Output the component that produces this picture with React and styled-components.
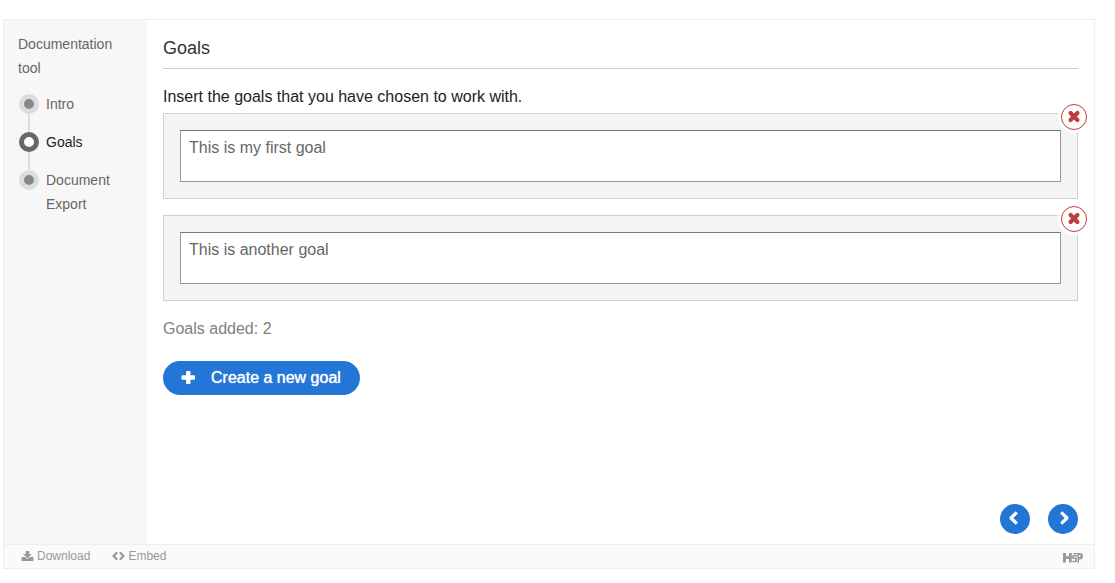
import React, { useState } from "react";
import styled, { createGlobalStyle, css } from "styled-components";

const GlobalStyle = createGlobalStyle`
  * {
    box-sizing: border-box;
  }

  body {
    margin: 0;
    background: #fff;
    font-family: "Liberation Sans", Arial, sans-serif;
  }
`;

const Page = styled.div`
  display: flex;
  min-height: 100vh;
  padding: 19px 20px 14px 3px;
`;

const Frame = styled.div`
  display: flex;
  flex: 1;
  flex-direction: column;
  border: 1px solid #eee;
`;

const Tool = styled.div`
  display: flex;
  flex: 1;
`;

const Sidebar = styled.nav`
  width: 143px;
  flex-shrink: 0;
  padding: 12px 14px;
  background: #f7f7f7;
  color: #666;
  font-size: 14px;
  line-height: 24px;
`;

const SidebarTitle = styled.div`
  margin-bottom: 12px;
`;

const Steps = styled.ol`
  display: flex;
  flex-direction: column;
  gap: 14px;
  margin: 0;
  padding: 0;
  list-style: none;
`;

const Step = styled.li`
  position: relative;

  /* line down to the next step */
  &:not(:last-child)::before {
    content: "";
    position: absolute;
    top: 12px;
    left: 10px;
    width: 2px;
    height: 38px;
    background: #ddd;
  }
`;

const StepButton = styled.button`
  position: relative;
  display: flex;
  align-items: flex-start;
  gap: 7px;
  width: 100%;
  padding: 0 0 0 1px;
  border: 0;
  background: none;
  color: ${props => (props.$active ? "#222" : "#666")};
  font: inherit;
  text-align: left;
  cursor: pointer;
`;

const Dot = styled.span`
  flex-shrink: 0;
  width: 20px;
  height: 20px;
  margin-top: 2px;
  border: 5px solid #ddd;
  border-radius: 50%;
  background: #888;

  ${props => props.$active && css`
    border-color: #666;
    background: #fff;
  `}
`;

const Main = styled.main`
  display: flex;
  flex: 1;
  flex-direction: column;
  min-width: 0;
  padding: 16px 16px 10px;
  color: #333;
  font-size: 16px;
  line-height: 24px;
`;

const Title = styled.h1`
  margin: 0 0 16px;
  padding-bottom: 8px;
  border-bottom: 1px solid #ccc;
  font-size: 18px;
  font-weight: normal;
`;

const Description = styled.p`
  margin: 0 0 4px;
  color: #222;
`;

const GoalList = styled.div`
  display: flex;
  flex-direction: column;
  gap: 16px;
`;

const Goal = styled.div`
  position: relative;
  display: flex;
  padding: 16px;
  border: 1px solid #d0d0d0;
  background: #f4f4f4;
`;

const GoalText = styled.textarea`
  display: block;
  flex: 1;
  height: 52px;
  padding: 5px 8px;
  border: 1px solid #999;
  border-top-color: #777;
  border-radius: 0;
  background: #fff;
  color: #666;
  font-family: inherit;
  font-size: 16px;
  line-height: 24px;
  resize: none;
  outline: none;
`;

const RemoveButton = styled.button`
  position: absolute;
  top: -10px;
  right: -10px;
  display: flex;
  align-items: center;
  justify-content: center;
  width: 26px;
  height: 26px;
  padding: 0;
  border: 1px solid #bf3d3d;
  border-radius: 50%;
  background: #fff;
  box-shadow: 0 0 0 3px #fff;
  color: #bf3d3d;
  cursor: pointer;
`;

const Counter = styled.p`
  margin: 16px 0 20px;
  color: #808080;
`;

const CreateButton = styled.button`
  display: flex;
  align-items: center;
  align-self: flex-start;
  gap: 14px;
  height: 34px;
  padding: 0 19px 0 16px;
  border: 0;
  border-radius: 17px;
  background: #2376d8;
  color: #fff;
  font-family: inherit;
  font-size: 16px;
  text-shadow: 0 0 1px #fff;
  cursor: pointer;
`;

const PageNav = styled.div`
  display: flex;
  justify-content: flex-end;
  gap: 18px;
  margin-top: auto;
`;

const RoundButton = styled.button`
  display: flex;
  align-items: center;
  justify-content: center;
  width: 30px;
  height: 30px;
  padding: 0;
  border: 0;
  border-radius: 50%;
  background: #2376d8;
  color: #fff;
  cursor: pointer;
`;

const Footer = styled.footer`
  display: flex;
  align-items: center;
  gap: 22px;
  height: 24px;
  padding: 0 11px 1px 17px;
  border-top: 1px solid #eee;
  background: #fafafa;
  color: #999;
`;

const FooterButton = styled.button`
  display: flex;
  align-items: center;
  gap: 3px;
  padding: 0;
  border: 0;
  background: none;
  color: inherit;
  font-family: inherit;
  font-size: 12px;
  line-height: 16px;
  cursor: pointer;
`;

const LogoLink = styled.a`
  display: flex;
  margin-left: auto;
  padding-top: 3px;
  color: #999;
`;

const CrossIcon = () => (
  <svg width="24" height="24" viewBox="0 0 24 24" stroke="currentColor" strokeWidth="4.2" strokeLinecap="round" aria-hidden="true">
    <path d="M8.600 8.100l6.800 6.800M15.400 8.100l-6.800 6.800" />
  </svg>
);

const PlusIcon = () => (
  <svg width="18" height="18" viewBox="0 0 18 18" fill="currentColor" aria-hidden="true">
    <rect x="2.500" y="6.300" width="13.500" height="4.400" rx="1" />
    <rect x="7" y="2" width="4.500" height="13" rx="1" />
  </svg>
);

const ChevronIcon = ({ points }) => (
  <svg width="30" height="30" viewBox="0 0 30 30" fill="none" stroke="currentColor" strokeWidth="3.2" strokeLinejoin="round" aria-hidden="true">
    <polyline points={points} />
  </svg>
);

const DownloadIcon = () => (
  <svg width="13" height="12" viewBox="0 0 13 12" fill="currentColor" aria-hidden="true">
    <path d="M4.700 1h3.600v3.200h2.500L6.500 8.300 2.200 4.200h2.500z" />
    <path d="M1 7h3l2.500 2L9 7h3q.5 0 .5.500v3q0 .5-.5.500H1q-.5 0-.5-.5v-3Q.5 7 1 7z" />
  </svg>
);

const CodeIcon = () => (
  <svg width="13" height="12" viewBox="0 0 13 12" fill="none" stroke="currentColor" strokeWidth="2.200" aria-hidden="true">
    <polyline points="5.200,2.300 1.600,6 5.200,9.700" />
    <polyline points="7.800,2.300 11.400,6 7.800,9.700" />
  </svg>
);

const Logo = () => (
  <svg width="20" height="10" viewBox="0 0 20 10" fill="currentColor" aria-hidden="true">
    <path d="M0 0h3v3.300h3V0h2.800v9.500H6V6H3v3.500H0z" />
    <path d="M9.600 2h4.600v1.400h-2.900l-.2 1.100q3.200-.4 3.200 2.300 0 2.700-3 2.700-1.900 0-2.300-1.600l1.500-.3q.2.600.8.600.9 0 .9-1.300t-1-1.200q-.5 0-.7.400L9 5.800z" />
    <path fillRule="evenodd" d="M10.500 0h6.200Q20 0 20 3.200t-3.300 3.200H16v3.100h-2.200q1.200-1 1.200-2.800 0-2-1.800-2.600h1.300V1.200h-4zM16 2v2.200h.6q1 0 1-1.100t-1-1.100z" />
  </svg>
);

const steps = ["Intro", "Goals", "Document Export"];

const App = () => {
  const [active, setActive] = useState(1);
  const [goals, setGoals] = useState([
    { id: 1, text: "This is my first goal" },
    { id: 2, text: "This is another goal" },
  ]);

  const changeGoal = (id, text) => {
    setGoals(goals.map(goal => (goal.id === id ? { ...goal, text } : goal)));
  };

  const removeGoal = id => {
    setGoals(goals.filter(goal => goal.id !== id));
  };

  const addGoal = () => {
    setGoals([...goals, { id: Date.now(), text: "" }]);
  };

  return (
    <Page>
      <GlobalStyle />
      <Frame>
        <Tool>
          <Sidebar>
            <SidebarTitle>Documentation tool</SidebarTitle>
            <Steps>
              {steps.map((step, index) => (
                <Step key={step}>
                  <StepButton $active={index === active} onClick={() => setActive(index)}>
                    <Dot $active={index === active} />
                    <span>{step}</span>
                  </StepButton>
                </Step>
              ))}
            </Steps>
          </Sidebar>
          <Main>
            <Title>Goals</Title>
            <Description>Insert the goals that you have chosen to work with.</Description>
            <GoalList>
              {goals.map(goal => (
                <Goal key={goal.id}>
                  <GoalText
                    aria-label="Goal"
                    value={goal.text}
                    onChange={e => changeGoal(goal.id, e.target.value)}
                  />
                  <RemoveButton aria-label="Remove goal" onClick={() => removeGoal(goal.id)}>
                    <CrossIcon />
                  </RemoveButton>
                </Goal>
              ))}
            </GoalList>
            <Counter>Goals added: {goals.length}</Counter>
            <CreateButton onClick={addGoal}>
              <PlusIcon />
              Create a new goal
            </CreateButton>
            <PageNav>
              <RoundButton aria-label="Previous" onClick={() => setActive(Math.max(active - 1, 0))}>
                <ChevronIcon points="16.800,8.300 11,14 16.800,19.700" />
              </RoundButton>
              <RoundButton aria-label="Next" onClick={() => setActive(Math.min(active + 1, 2))}>
                <ChevronIcon points="13.200,8.300 19,14 13.200,19.700" />
              </RoundButton>
            </PageNav>
          </Main>
        </Tool>
        <Footer>
          <FooterButton>
            <DownloadIcon />
            Download
          </FooterButton>
          <FooterButton>
            <CodeIcon />
            Embed
          </FooterButton>
          <LogoLink href="#" aria-label="H5P">
            <Logo />
          </LogoLink>
        </Footer>
      </Frame>
    </Page>
  );
};

export default App;
